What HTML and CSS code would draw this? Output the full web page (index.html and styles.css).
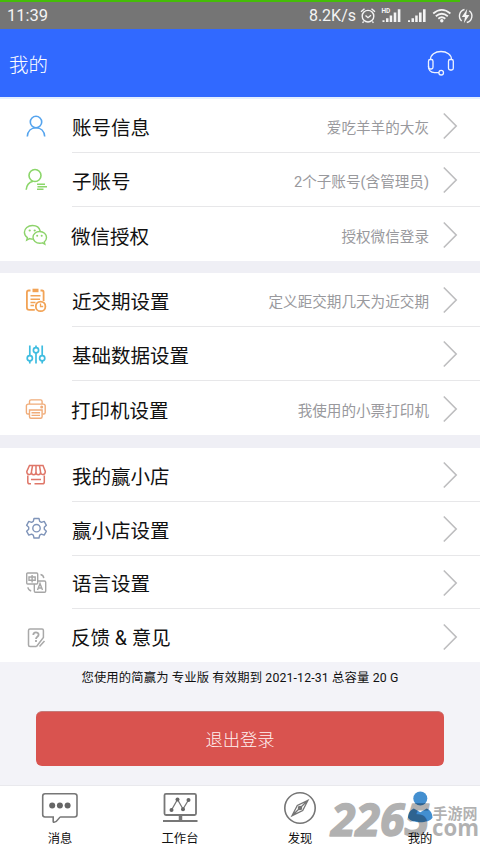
FILE: index.html
```html
<!DOCTYPE html>
<html lang="zh-CN">
<head>
<meta charset="utf-8">
<title>我的</title>
<link rel="stylesheet" href="styles.css">
</head>
<body>
<svg class="defs" width="0" height="0">
  <symbol id="chevron" viewBox="0 0 16 28"><path d="M1.8 1.5 14.2 14 1.8 26.5" fill="none" stroke="#bdbdbf" stroke-width="1.6"/></symbol>
</svg>
<div class="progress"></div>
<div class="status">
  <span class="clock">11:39</span>
  <span class="speed">8.2K/s</span>
  <svg class="status-icons" width="115" height="20" viewBox="360 5 115 20" fill="none" stroke="#f4f4f4" stroke-width="1.4">
    <circle cx="368" cy="15.2" r="5.8"/><path d="M365.500 14.500l2.500 2.200 3-2.500M361 10.800l3.500-3M375 10.800l-3.500-3M363.700 20.500l-1.200 1.200M372.300 20.500l1.200 1.200"/>
    <text class="hd" x="381.500" y="12.300">HD</text>
    <g fill="#f4f4f4" stroke="none">
      <path d="M382.500 19.200h2v1.800h-2zM386 17.200h2.500v3.800h-2.500zM389.700 14.500h2.500v6.500h-2.500zM393.700 11.500h2.600v9.500h-2.600zM397.800 8.300h2.600v12.700h-2.600z"/>
      <path d="M408 19.200h2v1.800h-2zM411.500 17.200h2.500v3.800h-2.500zM415.200 14.500h2.500v6.500h-2.500zM419 11.500h2.600v9.500h-2.600zM423 8.300h2.600v12.700h-2.600z"/>
      <circle cx="441.800" cy="19.700" r="1.700"/>
      <path d="M467.200 8l-5.400 8h3.200l-1.200 6.300 5.600-8.300h-3.200z"/>
    </g>
    <path d="M433.200 12.500q8.600-7.200 17.200 0M435.800 15.200q6-5 12 0M438.300 17.700q3.500-2.900 7 0" stroke-width="1.800"/>
    <path d="M464.500 8.500a6.700 6.700 0 0 0-2.800 11.500M466.800 21.500a6.700 6.700 0 0 0 2.500-11.800"/>
  </svg>
</div>
<header class="header">
  <h1>我的</h1>
  <svg width="28" height="26" viewBox="427 50 28 26" fill="none" stroke="#eef3ff" stroke-width="1.300">
    <path d="M430.500 59.500C430.500 55 435 51.500 441 51.500S451.500 55 451.500 59.500"/><rect x="428.500" y="59.500" width="4.500" height="9.500" rx="1.700"/><rect x="448.500" y="59.500" width="4.800" height="10.500" rx="1.700"/><path d="M428.500 66c0 4 2 6.500 6 6.700h4.500"/><circle cx="441.200" cy="72.700" r="2.300"/>
  </svg>
</header>
<main>
  <section class="group">
    <div class="row">
      <svg class="icon" viewBox="0 0 26 26" fill="none" stroke="#55a4ee" stroke-width="1.600"><circle cx="13" cy="9" r="5.700"/><path d="M4.300 23.500c.4-5.500 4-8.800 8.700-8.800s8.300 3.300 8.700 8.800"/></svg>
      <span class="label">账号信息</span><span class="value">爱吃羊羊的大灰</span><svg class="chevron"><use href="#chevron"/></svg>
    </div>
    <div class="row">
      <svg class="icon" viewBox="0 0 26 26" fill="none" stroke="#8bd66a" stroke-width="1.600"><circle cx="12" cy="8.500" r="6"/><path d="M3.200 22.800c.3-4.500 3-7.600 6.800-8.600M14 17.300h8M14.500 19.800h9.500M14 22.300h6.500"/></svg>
      <span class="label">子账号</span><span class="value">2个子账号(含管理员)</span><svg class="chevron"><use href="#chevron"/></svg>
    </div>
    <div class="row low">
      <svg class="icon" viewBox="0 0 26 26" fill="none" stroke="#8dd36b" stroke-width="1.400"><path d="M17.200 9.200C16.500 5.800 13.500 3.500 9.500 3.500 4.900 3.500 1.400 6.500 1.400 10.300c0 2.200 1.100 4 3 5.300l-.7 2.500 2.900-1.500q1.800.6 3.700.5"/><path d="M16.700 9.500c-3.900 0-6.700 2.500-6.700 5.800s2.900 5.900 6.800 5.900q1.500 0 2.700-.4l2.300 1.300-.5-2.200c1.300-1.100 2.200-2.700 2.200-4.500 0-3.300-2.900-5.900-6.800-5.900z"/><g fill="#8dd36b" stroke="none"><circle cx="6.700" cy="8.500" r="1.100"/><circle cx="11.700" cy="8.500" r="1.100"/><circle cx="14.200" cy="13.700" r="1"/><circle cx="18.700" cy="13.700" r="1"/></g></svg>
      <span class="label">微信授权</span><span class="value">授权微信登录</span><svg class="chevron"><use href="#chevron"/></svg>
    </div>
  </section>
  <section class="group second">
    <div class="row">
      <svg class="icon" viewBox="0 0 26 26" fill="none" stroke="#f2a356" stroke-width="1.800"><path d="M7.500 3.500H5.700C4.500 3.500 3.900 4.300 3.900 5.500v15c0 1.600.8 2.400 2.400 2.400h5.500M17.500 3.500h1.500c1 0 1.600.7 1.600 1.800V14"/><path d="M9.500 1.700h6v3.500h-6z" fill="#f2a356" stroke="none"/><path d="M7.500 8.700h10M7.500 12.200h9.500M7.500 15.500h5M7.500 18.500h3.500" stroke-width="1.400"/><circle cx="17.600" cy="19.400" r="4.800"/><path d="M17.500 16.500v3h2.700" stroke-width="1.300"/></svg>
      <span class="label">近交期设置</span><span class="value">定义距交期几天为近交期</span><svg class="chevron"><use href="#chevron"/></svg>
    </div>
    <div class="row">
      <svg class="icon" viewBox="0 0 26 26" fill="none" stroke="#3fbde0" stroke-width="1.700"><path d="M6.800 4.500v10M6.800 20v2.500M13 4.500v2M13 12v10.500M19.200 4.500v10M19.200 20v2.500"/><circle cx="6.800" cy="17.200" r="2.600"/><circle cx="13" cy="9.300" r="2.600"/><circle cx="19.200" cy="17.200" r="2.600"/></svg>
      <span class="label">基础数据设置</span><svg class="chevron"><use href="#chevron"/></svg>
    </div>
    <div class="row low">
      <svg class="icon" viewBox="0 0 26 26" fill="none" stroke="#f0ac79" stroke-width="1.400"><path d="M6.500 8V5.500c0-1 .6-1.600 1.600-1.600h9.500c1 0 1.500.6 1.500 1.600V8M6 18H5c-1.100 0-1.600-.6-1.600-1.600V10c0-1.200.7-1.900 1.900-1.900h15c1.200 0 1.900.7 1.900 1.900v6.400c0 1-.6 1.600-1.600 1.600h-1"/><path d="M6.500 14h12.600v6.800c0 1-.6 1.500-1.500 1.500H8c-1 0-1.500-.5-1.500-1.500zM8.500 16.700h8.500M8.500 19.400h8.500"/><circle cx="18.700" cy="11" r=".8"/></svg>
      <span class="label">打印机设置</span><span class="value">我使用的小票打印机</span><svg class="chevron"><use href="#chevron"/></svg>
    </div>
  </section>
  <section class="group third">
    <div class="row">
      <svg class="icon" viewBox="0 0 26 26" fill="none" stroke="#df7668" stroke-width="1.500"><path d="M6.500 3.500h13.500l2.300 6c0 4-4.700 4-4.700.5 0 3.800-4.600 3.800-4.600 0 0 3.800-4.600 3.800-4.600 0 0 3.500-4.600 3.500-4.600-.5zM9.600 3.500l-1.200 6.500M13 3.500v6.500M16.400 3.500l1.200 6.500M4.800 13.500v6.500c0 1.200.6 1.800 1.700 1.800H8M21.300 13.500v6.500c0 1.200-.6 1.800-1.700 1.800H11.500M8 17.500h10"/></svg>
      <span class="label">我的赢小店</span><svg class="chevron"><use href="#chevron"/></svg>
    </div>
    <div class="row">
      <svg class="icon up" viewBox="0 0 26 26" fill="none" stroke="#7f94b9" stroke-width="1.400" stroke-linejoin="round"><path d="M11 3.500h5l.7 2.900 1.700 1 2.800-1 2.200 3.900-2.100 2v1.900l2.100 2-2.200 3.900-2.800-1-1.700 1-.7 2.900h-5l-.7-2.900-1.700-1-2.800 1-2.200-3.900 2.100-2v-1.900l-2.100-2 2.200-3.900 2.800 1 1.700-1z"/><circle cx="13.500" cy="13.200" r="3.700"/></svg>
      <span class="label">赢小店设置</span><svg class="chevron"><use href="#chevron"/></svg>
    </div>
    <div class="row short">
      <svg class="icon" viewBox="0 0 26 26" fill="none" stroke="#a6a6a6" stroke-width="1.400"><rect x="3.700" y="3" width="11" height="11" rx="1"/><path d="M14.500 11h7c.8 0 1.200.4 1.200 1.200v8.800c0 .8-.4 1.200-1.200 1.200h-9c-.8 0-1.200-.4-1.200-1.200v-7M6 7h6.200v3.200H6zM9.100 5v7.500M14.500 20l2.500-6.500 2.500 6.500M15.500 18h3M17.500 4.500c1.800.3 3 1.500 3.300 3.700M4.900 17.300c.2 2 1.300 3.200 3.300 3.700"/></svg>
      <span class="label">语言设置</span><svg class="chevron"><use href="#chevron"/></svg>
    </div>
    <div class="row low short">
      <svg class="icon" viewBox="0 0 26 26" fill="none" stroke="#a9a9a9" stroke-width="1.500"><path d="M13.500 22.500H7c-1 0-1.500-.5-1.500-1.500V6.500C5.500 5.500 6 5 7 5h12c.9 0 1.400.5 1.400 1.400V13.500L13.500 22.500M16.500 22.500l5-5.500"/><path d="M10.300 11c0-3.500 5.300-3.300 5.300-.3 0 2-2.600 2-2.600 4.200M13 16v1.900" stroke-width="1.800"/></svg>
      <span class="label">反馈 &amp; 意见</span><svg class="chevron"><use href="#chevron"/></svg>
    </div>
  </section>
  <section class="account">
    <p>您使用的简赢为 专业版 有效期到 2021-12-31 总容量 20 G</p>
    <button class="logout">退出登录</button>
  </section>
</main>
<nav class="tabs">
  <a class="tab"><svg width="38" height="34" viewBox="41 791 38 34" fill="none" stroke="#777" stroke-width="1.600"><path d="M45 793.700h29.500c1.500 0 2.500 1 2.500 2.500v18.300c0 1.500-1 2.500-2.500 2.500H60.500c-1.500 0-2.500 4.800-6.500 5.300-1 0-.8-1.300-.8-2.300v-3H45c-1.500 0-2.300-1-2.300-2.500v-18.300c0-1.500.8-2.500 2.300-2.500z"/><g fill="#666" stroke="none"><circle cx="52.200" cy="805.500" r="3"/><circle cx="59.900" cy="805.500" r="3"/><circle cx="67.600" cy="805.500" r="3"/></g></svg><span>消息</span></a>
  <a class="tab"><svg width="38" height="34" viewBox="161 791 38 34" fill="none" stroke="#777" stroke-width="1.800"><rect x="164.500" y="793.800" width="31.500" height="21.200" rx="1.500"/><path d="M163 821h34.500"/><path d="M180.500 815v6" stroke-width="3.500"/><path d="M171.500 810l6-10.500 5.500 9.500 5.500-9" stroke-width="1.300"/><g fill="#666" stroke="none"><circle cx="171.500" cy="810" r="2"/><circle cx="177.500" cy="799.500" r="2"/><circle cx="183" cy="809.200" r="2"/><circle cx="188.500" cy="800" r="2"/></g></svg><span>工作台</span></a>
  <a class="tab"><svg width="38" height="34" viewBox="281 791 38 34" fill="none" stroke="#757575" stroke-width="1.600"><circle cx="300" cy="808" r="15.200"/><path d="M308 800.300l-10.700 5.200-5.300 10.200 10.700-5.200zM308 800.300l-16 15.400" stroke-width="1.300"/><circle cx="300" cy="808" r="1.500" fill="#757575"/></svg><span>发现</span></a>
  <a class="tab"><svg width="38" height="34" viewBox="401 791 38 34" fill="#438fd0"><circle cx="420.300" cy="798.500" r="7"/><path d="M413.800 808.500l6.500 3.700 6.500-3.700c3.500 1.500 5.700 5 5.700 9.300-3.500 6-21 6-24.500 0 0-4.300 2.200-7.800 5.800-9.300z"/></svg><span>我的</span></a>
  <svg class="watermark" width="155" height="48" viewBox="325 797 155 48" aria-hidden="true"><text class="wm-num" x="331" y="835.500" textLength="98" lengthAdjust="spacingAndGlyphs">2265</text><text class="wm-cn" x="432.500" y="819">手游网</text><text class="wm-com" x="432" y="835.500" textLength="47" lengthAdjust="spacingAndGlyphs">com</text></svg>
</nav>
</body>
</html>
```
FILE: styles.css
```css
* { box-sizing: border-box; }
body {
  margin: 0;
  width: 480px;
  height: 853px;
  overflow: hidden;
  display: flex;
  flex-direction: column;
  background: #f3f3f8;
  color: #111;
  font-family: Roboto, "Noto Sans CJK SC", sans-serif;
}
svg { display: block; flex: none; }
.defs { height: 0; }
.progress { height: 2px; background: linear-gradient(to right, #45bd08 460px, #757575 460px); }
.status {
  height: 27px;
  display: flex;
  align-items: center;
  padding: 0 5px 0 7px;
  background: #757575;
  color: #f4f4f4;
  font-size: 16.500px;
  line-height: 27px;
}
.clock { flex: 1; }
.speed { margin-right: 4px; font-size: 16px; }
.hd { font: bold 6.500px Roboto, sans-serif; fill: #f4f4f4; stroke: none; }
.header {
  height: 70px;
  display: flex;
  align-items: center;
  justify-content: space-between;
  padding: 0 25px 0 9px;
  background: #3169ff;
  border-bottom: 2px solid #e4efff;
  color: #fff;
}
.header h1 { margin: 5px 0 0; font-size: 19.500px; font-weight: 300; line-height: 28px; }
.group { background: #fff; }
.second { border-top: 12px solid #efeff5; }
.third { border-top: 13px solid #efeff5; }
.row {
  position: relative;
  display: flex;
  align-items: center;
  height: 54px;
  padding: 0 22px 0 23px;
}
.row::after {
  content: "";
  position: absolute;
  left: 72px;
  right: 0;
  bottom: 0;
  height: 1px;
  background: #e7e7e9;
}
.row:last-child::after { display: none; }
.short { height: 53px; }
.icon { width: 26px; height: 26px; }
.label { flex: 1; margin-left: 23px; padding-top: 5px; font-size: 19.500px; line-height: 28px; white-space: nowrap; }
.value { padding-top: 3px; color: #99999d; font-size: 14.600px; line-height: 22px; margin-right: 13px; white-space: nowrap; }
.chevron { width: 16px; height: 28px; }
.low { padding-top: 2px; }
.low .label { margin-left: 22px; margin-right: 1px; }
.up { margin-bottom: 2px; }
.account { padding: 6px 36px 0; }
.account p { margin: 0; height: 20px; line-height: 21px; font-size: 12.300px; letter-spacing: .15px; text-align: center; white-space: nowrap; }
.logout {
  display: block;
  width: 408px;
  height: 55px;
  margin: 23px 0 0;
  padding: 2px 0 0;
  border: 0;
  border-top: 1px solid #c47b79;
  border-radius: 6px;
  background: #d9534f;
  color: #fff2f2;
  font: 300 17.300px/52px Roboto, "Noto Sans CJK SC", sans-serif;
}
.tabs {
  position: relative;
  display: flex;
  margin-top: auto;
  height: 68px;
  background: #fff;
  border-top: 1px solid #e9e9ed;
}
.tab { flex: 1; display: flex; flex-direction: column; align-items: center; padding-top: 5px; }
.tab span { margin-top: 5px; font-size: 12.300px; line-height: 18px; }
.watermark { position: absolute; right: 0; top: 11px; opacity: .3; overflow: visible; }
.wm-num { font: italic bold 44px "Open Sans", sans-serif; stroke: #000; stroke-width: 1.5; stroke-linejoin: round; }
.wm-cn { font: bold 15px "Noto Sans CJK SC", sans-serif; }
.wm-com { font: bold 23px "Open Sans", sans-serif; }
```
